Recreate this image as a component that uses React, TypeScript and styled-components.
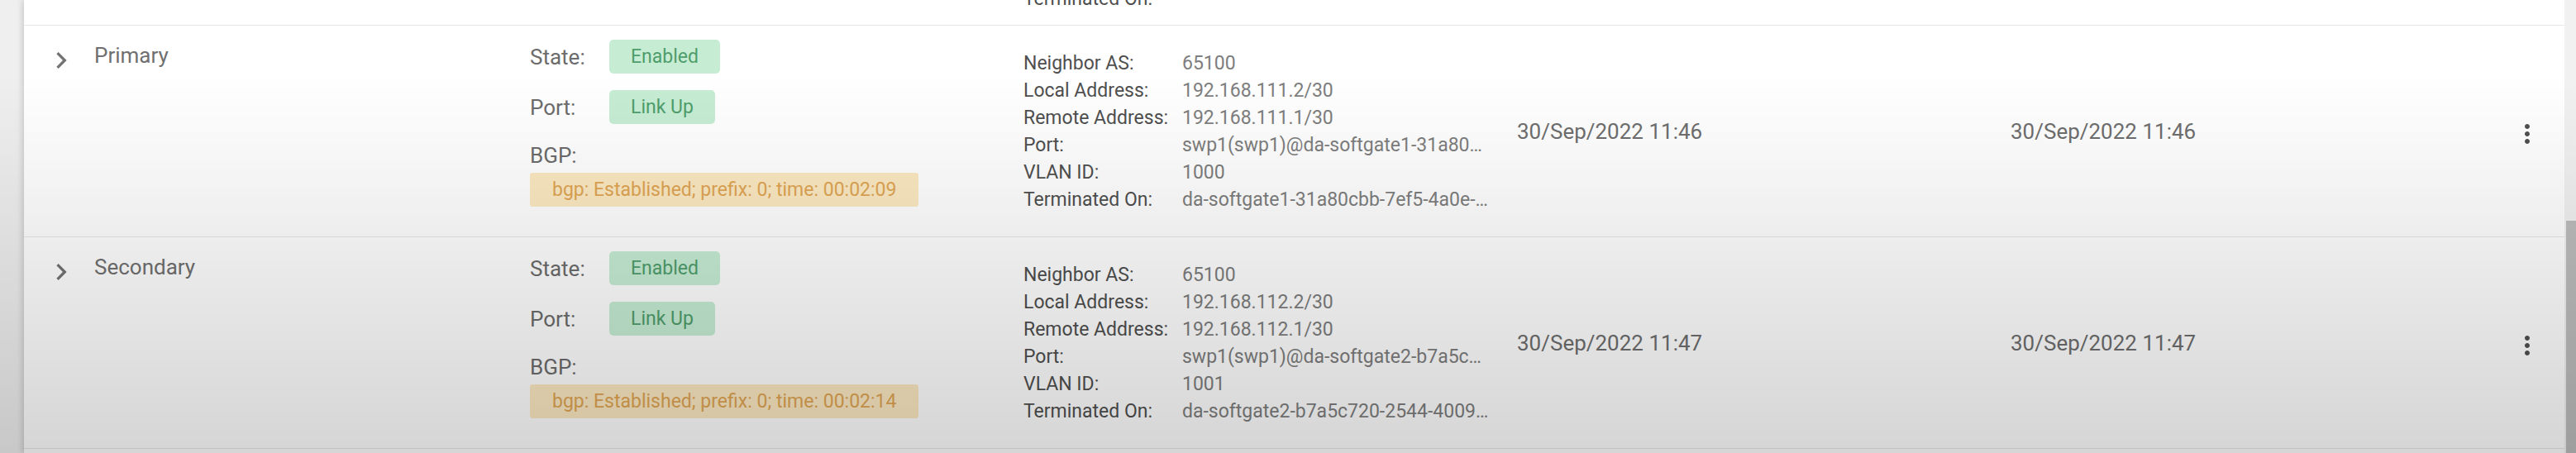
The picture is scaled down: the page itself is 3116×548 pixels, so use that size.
import React from "react";
import styled, { createGlobalStyle } from "styled-components";

const GlobalStyle = createGlobalStyle`
  html, body {
    margin: 0;
    padding: 0;
    height: 548px;
    overflow: hidden;
  }
  body {
    background: #efefef;
    font-family: Roboto, "Liberation Sans", sans-serif;
  }
`;

type InfoItem = { label: string; value: string };

type Connection = {
  name: string;
  state: string;
  port: string;
  bgp: string;
  info: InfoItem[];
  created: string;
  updated: string;
};

const connections: Connection[] = [
  {
    name: "Primary",
    state: "Enabled",
    port: "Link Up",
    bgp: "bgp: Established; prefix: 0; time: 00:02:09",
    info: [
      { label: "Neighbor AS:", value: "65100" },
      { label: "Local Address:", value: "192.168.111.2/30" },
      { label: "Remote Address:", value: "192.168.111.1/30" },
      { label: "Port:", value: "swp1(swp1)@da-softgate1-31a80\u2026" },
      { label: "VLAN ID:", value: "1000" },
      { label: "Terminated On:", value: "da-softgate1-31a80cbb-7ef5-4a0e-\u2026" },
    ],
    created: "30/Sep/2022 11:46",
    updated: "30/Sep/2022 11:46",
  },
  {
    name: "Secondary",
    state: "Enabled",
    port: "Link Up",
    bgp: "bgp: Established; prefix: 0; time: 00:02:14",
    info: [
      { label: "Neighbor AS:", value: "65100" },
      { label: "Local Address:", value: "192.168.112.2/30" },
      { label: "Remote Address:", value: "192.168.112.1/30" },
      { label: "Port:", value: "swp1(swp1)@da-softgate2-b7a5c\u2026" },
      { label: "VLAN ID:", value: "1001" },
      { label: "Terminated On:", value: "da-softgate2-b7a5c720-2544-4009\u2026" },
    ],
    created: "30/Sep/2022 11:47",
    updated: "30/Sep/2022 11:47",
  },
];

export default function App() {
  return (
    <>
      <GlobalStyle />
      <Shell>
        <Card>
          <Row $height={30}>
            <span />
            <span />
            <span />
            <PrevInfoCell>
              <InfoLabel>Terminated On:</InfoLabel>
            </PrevInfoCell>
          </Row>
          {connections.map((c) => (
            <Row key={c.name} $height={255}>
              <ExpandCell>
                <svg width="40" height="40" viewBox="0 0 24 24">
                  <path fill="#737373" d="M8.59 16.59 13.17 12 8.59 7.41 10 6l6 6-6 6-1.41-1.41z" />
                </svg>
              </ExpandCell>
              <NameCell>{c.name}</NameCell>
              <StatusCell>
                <StatusLine>
                  <StatusLabel>State:</StatusLabel>
                  <Badge>{c.state}</Badge>
                </StatusLine>
                <StatusLine $gap>
                  <StatusLabel>Port:</StatusLabel>
                  <Badge>{c.port}</Badge>
                </StatusLine>
                <BgpLabel>BGP:</BgpLabel>
                <BgpBar>{c.bgp}</BgpBar>
              </StatusCell>
              <InfoCell>
                <InfoGrid>
                  {c.info.map((i) => (
                    <React.Fragment key={i.label}>
                      <InfoLabel>{i.label}</InfoLabel>
                      <InfoValue>{i.value}</InfoValue>
                    </React.Fragment>
                  ))}
                </InfoGrid>
              </InfoCell>
              <DateCell>{c.created}</DateCell>
              <DateCell>{c.updated}</DateCell>
              <ActionCell>
                <svg width="36" height="36" viewBox="0 0 24 24">
                  <path
                    fill="#505050"
                    d="M12 8c1.1 0 2-.9 2-2s-.9-2-2-2-2 .9-2 2 .9 2 2 2zm0 2c-1.1 0-2 .9-2 2s.9 2 2 2 2-.9 2-2-.9-2-2-2zm0 6c-1.1 0-2 .9-2 2s.9 2 2 2 2-.9 2-2-.9-2-2-2z"
                  />
                </svg>
              </ActionCell>
            </Row>
          ))}
        </Card>
        <ScrollTrack>
          <ScrollThumb />
        </ScrollTrack>
        <Shade />
      </Shell>
    </>
  );
}

const Shell = styled.div`
  position: relative;
  display: flex;
  height: 548px;
  padding-left: 29px;
`;

const Card = styled.div`
  width: 3073px;
  flex-shrink: 0;
  background: #fff;
  box-shadow: -2px 0 7px rgba(0, 0, 0, 0.16);
  overflow: hidden;
`;

const Row = styled.div<{ $height: number }>`
  display: grid;
  grid-template-columns: 69px 527px 597px 597px 597px 597px 89px;
  height: ${(p) => p.$height}px;
  border-bottom: 1px solid #e6e6e6;
  overflow: hidden;
`;

const ExpandCell = styled.div`
  padding: 22px 0 0 25px;
  svg {
    display: block;
  }
`;

const NameCell = styled.div`
  padding: 21px 16px 0;
  font-size: 26px;
  line-height: 31px;
  color: #707070;
`;

const StatusCell = styled.div`
  padding: 17px 16px 0;
  display: flex;
  flex-direction: column;
  align-items: flex-start;
`;

const StatusLine = styled.div<{ $gap?: boolean }>`
  display: flex;
  align-items: center;
  height: 41px;
  margin-top: ${(p) => (p.$gap ? "20px" : "0")};
`;

const StatusLabel = styled.span`
  width: 96px;
  font-size: 26px;
  color: #6c6c6c;
`;

const Badge = styled.span`
  display: inline-flex;
  align-items: center;
  height: 41px;
  padding: 0 26px;
  border-radius: 5px;
  background: #c6edd4;
  color: #4f9d6b;
  font-size: 23px;
`;

const BgpLabel = styled.div`
  margin-top: 23px;
  font-size: 26px;
  line-height: 31px;
  color: #6c6c6c;
`;

const BgpBar = styled.div`
  display: inline-flex;
  align-items: center;
  height: 41px;
  margin-top: 5px;
  padding: 0 27px;
  border-radius: 3px;
  background: #fce9c2;
  color: #e0a553;
  font-size: 23px;
  white-space: nowrap;
`;

const InfoCell = styled.div`
  padding: 0 16px;
  display: flex;
  align-items: center;
`;

const PrevInfoCell = styled.div`
  padding: 0 16px;
  margin-top: -18px;
`;

const InfoGrid = styled.div`
  display: grid;
  grid-template-columns: 192px 385px;
  font-size: 23px;
  line-height: 33px;
`;

const InfoLabel = styled.span`
  display: block;
  font-size: 23px;
  line-height: 33px;
  color: #4f4f4f;
`;

const InfoValue = styled.span`
  color: #7e7e7e;
  white-space: nowrap;
  overflow: hidden;
  text-overflow: ellipsis;
`;

const DateCell = styled.div`
  padding: 0 16px;
  display: flex;
  align-items: center;
  font-size: 26px;
  color: #6e6e6e;
`;

const ActionCell = styled.div`
  display: flex;
  align-items: center;
  justify-content: center;
  padding: 7px 2px 0 0;
  svg {
    display: block;
  }
`;

const ScrollTrack = styled.div`
  width: 14px;
  flex-shrink: 0;
  display: flex;
  flex-direction: column;
  background: #f1f1f1;
`;

const ScrollThumb = styled.div`
  flex: 1;
  margin: 267px 0 0 2px;
  background: #bdbdbd;
`;

const Shade = styled.div`
  position: absolute;
  inset: 0;
  pointer-events: none;
  background: linear-gradient(to bottom, rgba(0, 0, 0, 0) 90px, rgba(0, 0, 0, 0.165) 548px);
`;
